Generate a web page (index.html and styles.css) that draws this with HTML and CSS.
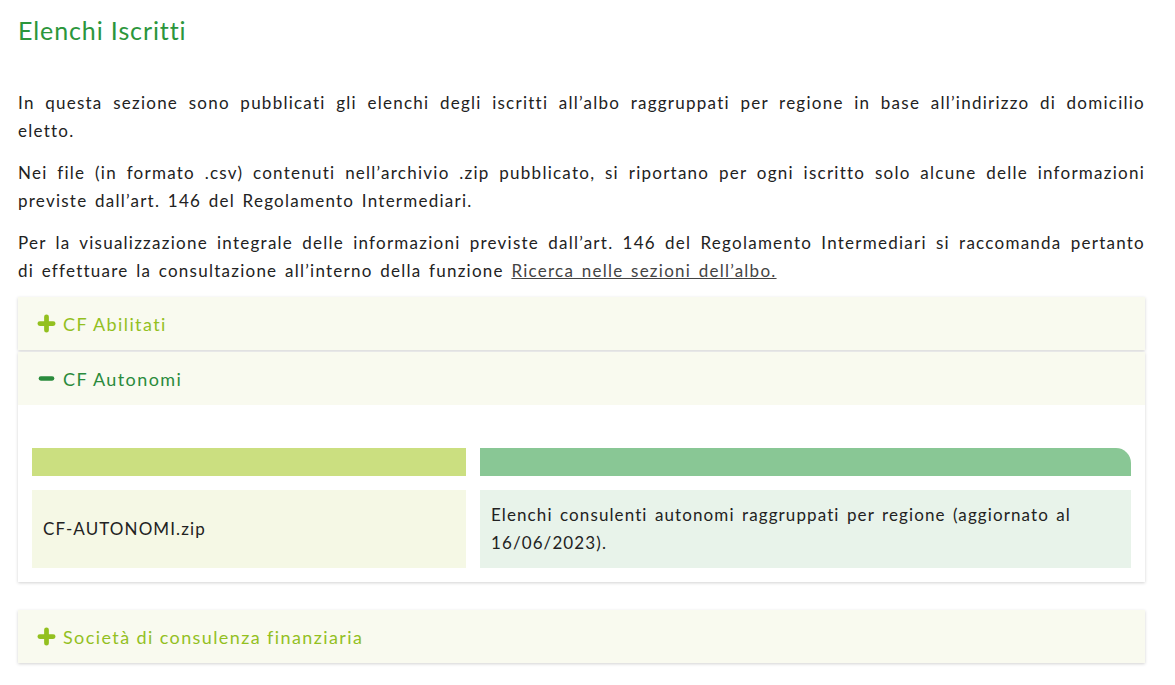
FILE: index.html
```html
<!DOCTYPE html>
<html lang="it">
<head>
<meta charset="utf-8">
<title>Elenchi Iscritti</title>
<link rel="stylesheet" href="styles.css">
</head>
<body>
<main class="page">
  <h1 class="title">Elenchi Iscritti</h1>
  <p class="text">In questa sezione sono pubblicati gli elenchi degli iscritti all’albo raggruppati per regione in base all’indirizzo di domicilio eletto.</p>
  <p class="text">Nei file (in formato .csv) contenuti nell’archivio .zip pubblicato, si riportano per ogni iscritto solo alcune delle informazioni previste dall’art. 146 del Regolamento Intermediari.</p>
  <p class="text last">Per la visualizzazione integrale delle informazioni previste dall’art. 146 del Regolamento Intermediari si raccomanda pertanto di effettuare la consultazione all’interno della funzione <a class="link" href="#">Ricerca nelle sezioni dell’albo.</a></p>

  <div class="accordion">
    <section class="panel">
      <div class="panel-head closed">
        <svg class="icon" viewBox="0 0 20 20" width="19" height="19"><path d="M10 3v14M3 10h14" stroke="currentColor" stroke-width="5" stroke-linecap="round" fill="none"/></svg>
        <span>CF Abilitati</span>
      </div>
    </section>
    <section class="panel open">
      <div class="panel-head opened">
        <svg class="icon" viewBox="0 0 20 20" width="19" height="19"><path d="M4 10h12" stroke="currentColor" stroke-width="4.5" stroke-linecap="round" fill="none"/></svg>
        <span>CF Autonomi</span>
      </div>
      <div class="panel-body">
        <div class="files">
          <div class="th th-file"></div>
          <div class="th th-desc"></div>
          <div class="td td-file">CF-AUTONOMI.zip</div>
          <div class="td td-desc">Elenchi consulenti autonomi raggruppati per regione (aggiornato al 16/06/2023).</div>
        </div>
      </div>
    </section>
    <section class="panel">
      <div class="panel-head closed">
        <svg class="icon" viewBox="0 0 20 20" width="19" height="19"><path d="M10 3v14M3 10h14" stroke="currentColor" stroke-width="5" stroke-linecap="round" fill="none"/></svg>
        <span>Società di consulenza finanziaria</span>
      </div>
    </section>
  </div>
</main>
</body>
</html>
```
FILE: styles.css
```css
* { box-sizing: border-box; }
html, body { margin: 0; background: #fff; }
body {
  font-family: "Lato", "Open Sans", sans-serif;
  color: #222;
}
.page {
  width: 1145px;
  padding: 13px 0 20px 18px;
}
.title {
  margin: 0 0 42px;
  font-size: 25px;
  line-height: 34px;
  font-weight: 400;
  letter-spacing: 0.9px;
  color: #2b963c;
}
.text {
  margin: 0 0 14px;
  font-size: 17px;
  line-height: 28px;
  text-align: justify;
  letter-spacing: 1.25px;
  word-spacing: 2px;
}
.text.last { margin-bottom: 12px; }
.link { color: #444; text-decoration: underline; }
.accordion {
  display: flex;
  flex-direction: column;
  gap: 2px;
}
.panel {
  background: #fff;
  box-shadow: 0 1px 3px rgba(0,0,0,0.18);
}
.panel.open { margin-bottom: 26px; }
.panel-head {
  height: 53px;
  display: flex;
  align-items: center;
  gap: 7px;
  padding-left: 19px;
  background: #f9faef;
  font-size: 18px;
  letter-spacing: 1.4px;
}
.panel-head.closed { color: #93c01f; }
.panel-head.opened { color: #2a8b3c; }
.icon { flex: none; }
.panel-body {
  padding: 43px 14px 14px;
}
.files {
  display: grid;
  grid-template-columns: 434px 651px;
  column-gap: 14px;
  row-gap: 14px;
}
.th { height: 28px; }
.th-file { background: #cbdf80; }
.th-desc { background: #89c795; border-top-right-radius: 15px; }
.td {
  min-height: 78px;
  padding: 11px 11px 11px;
  font-size: 17px;
  line-height: 28px;
  letter-spacing: 1.1px;
  word-spacing: 2px;
  color: #222;
  display: flex;
  align-items: center;
}
.td-file { background: #f5f8e5; }
.td-desc { background: #e8f3ea; }
```
